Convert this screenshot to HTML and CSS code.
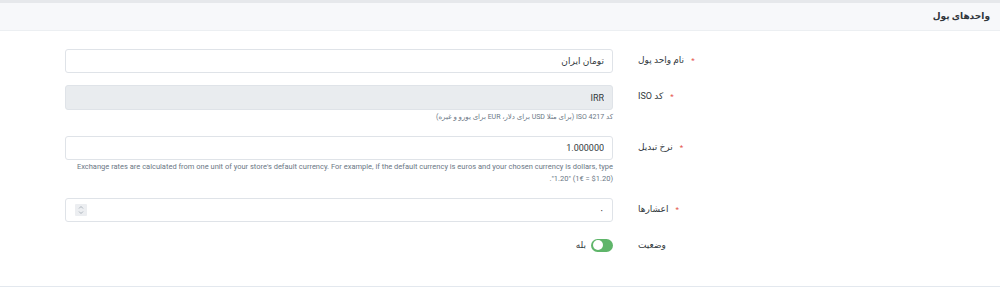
FILE: index.html
```html
<!DOCTYPE html>
<html lang="fa" dir="rtl">
<head>
<meta charset="utf-8">
<title>واحدهای پول</title>
<link rel="stylesheet" href="styles.css">
</head>
<body>
<div class="top-strip"></div>
<div class="card">
  <div class="card-header">واحدهای پول</div>
  <form class="card-body">
    <div class="form-group">
      <label class="form-label"><span class="req">*</span>نام واحد پول</label>
      <div class="field">
        <input class="form-control" type="text" value="تومان ایران">
      </div>
    </div>
    <div class="form-group">
      <label class="form-label"><span class="req">*</span>کد ISO</label>
      <div class="field">
        <input class="form-control disabled" type="text" value="IRR" readonly>
        <div class="help">کد ISO 4217 (برای مثلا USD برای دلار، EUR برای یورو و غیره)</div>
      </div>
    </div>
    <div class="form-group">
      <label class="form-label"><span class="req">*</span>نرخ تبدیل</label>
      <div class="field">
        <input class="form-control" type="text" value="1.000000">
        <div class="help help-en">Exchange rates are calculated from one unit of your store's default currency. For example, if the default currency is euros and your chosen currency is dollars, type "1.20" (1€ = $1.20).</div>
      </div>
    </div>
    <div class="form-group">
      <label class="form-label"><span class="req">*</span>اعشارها</label>
      <div class="field">
        <div class="form-control number">
          <input class="number-input" type="text" value="٠">
          <span class="spinner">
            <svg width="12" height="12" viewBox="0 0 12 12"><path d="M4 4.5 L6 2.5 L8 4.5 M4 7.5 L6 9.5 L8 7.5" fill="none" stroke="#9aa3ad" stroke-width="0.8"/></svg>
          </span>
        </div>
      </div>
    </div>
    <div class="form-group toggle-group">
      <label class="form-label">وضعیت</label>
      <div class="field switch-field">
        <span class="switch"><span class="knob"></span></span>
        <span class="switch-label">بله</span>
      </div>
    </div>
  </form>
</div>
</body>
</html>
```
FILE: styles.css
```css
html, body {
  margin: 0;
  padding: 0;
  background: #ffffff;
}
body {
  font-family: Roboto, "DejaVu Sans", sans-serif;
  color: #333a40;
  width: 1000px;
}
.top-strip {
  height: 3px;
  background: #e6e8eb;
}
.card {
  border-bottom: 1px solid #e3e8ee;
}
.card-header {
  height: 27px;
  line-height: 27px;
  background: #f7f8fa;
  border-bottom: 1px solid #eceff2;
  padding-right: 10px;
  font-size: 9px;
  font-weight: bold;
  color: #2f353a;
}
.card-body {
  padding: 18px 0 30px 0;
  margin: 0;
}
.form-group {
  display: flex;
  align-items: flex-start;
  padding-right: 300px;
  margin-bottom: 12px;
}
.form-group:last-child {
  margin-bottom: 0;
}
.form-label {
  width: 62px;
  flex: none;
  text-align: left;
  font-size: 9px;
  line-height: 14px;
  padding-top: 4px;
  color: #333a40;
}
.req {
  color: #e5534b;
  margin-left: 7px;
  font-size: 8px;
}
.field {
  width: 548px;
  margin-right: 25px;
  flex: none;
}
.form-control {
  box-sizing: border-box;
  display: block;
  width: 548px;
  height: 24px;
  border: 1px solid #dfe3e8;
  border-radius: 3px;
  padding: 0 8px;
  font-family: Roboto, "DejaVu Sans", sans-serif;
  font-size: 9px;
  color: #333a40;
  background: #ffffff;
  outline: none;
  margin: 0;
}
.form-control.disabled {
  background: #e9ecef;
  height: 25px;
}
.help {
  font-size: 7px;
  line-height: 12px;
  color: #6b7785;
  padding-top: 1px;
  margin-bottom: 1px;
}
.help-en {
  font-size: 7.5px;
}
.number {
  display: flex;
  align-items: center;
  justify-content: space-between;
}
.number-input {
  border: none;
  outline: none;
  background: transparent;
  font-family: Roboto, "DejaVu Sans", sans-serif;
  font-size: 9px;
  color: #333a40;
  width: 100px;
  padding: 0;
  margin: 0;
}
.spinner {
  width: 12px;
  height: 12px;
  background: #eceef1;
  border-radius: 1px;
  display: flex;
  margin-left: 1px;
}
.switch-field {
  display: flex;
  align-items: center;
  height: 22px;
  gap: 5px;
}
.switch {
  width: 22px;
  height: 13px;
  border-radius: 7px;
  background: #5fb56a;
  display: flex;
  align-items: center;
  justify-content: flex-end;
  box-sizing: border-box;
  padding: 0 1.5px;
}
.knob {
  width: 10px;
  height: 10px;
  border-radius: 50%;
  background: #ffffff;
}
.switch-label {
  font-size: 9px;
  color: #333a40;
}
```
